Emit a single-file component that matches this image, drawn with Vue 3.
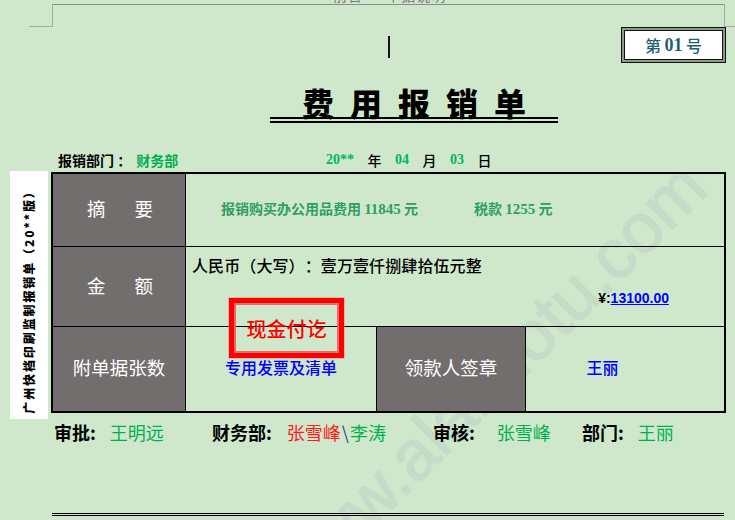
<script setup>
const sideText = '广州快档印刷监制报销单（20**版）'
</script>

<template>
  <div class="page">
    <div class="watermark">www.alaimotu.com</div>
    <div class="top-clip">前言 · 单据说明</div>
    <div class="rule-top"></div>
    <i class="crop crop-lv"></i><i class="crop crop-lh"></i>
    <i class="crop crop-rv"></i><i class="crop crop-rh"></i>
    <i class="caret"></i>

    <div class="number-row layer">
      <div class="number-box"><span>第 <b>01</b> 号</span></div>
    </div>

    <div class="title-row layer">
      <h1 class="title">费用报销单</h1>
    </div>

    <div class="meta layer">
      <div class="dept"><span class="k">报销部门 ：</span><span class="green dept-name">财务部</span></div>
      <div class="date">
        <b class="num">20**</b><span>年</span><b class="num">04</b><span>月</span><b class="num">03</b><span>日</span>
      </div>
    </div>

    <div class="form-wrap layer">
      <div class="side"><span>{{ sideText }}</span></div>
      <div class="sheet">
        <div class="head r1 wide"><span>摘</span><span>要</span></div>
        <div class="summary">
          <span>报销购买办公用品费用 <span class="n">11845</span> 元</span>
          <span>税款 <span class="n">1255</span> 元</span>
        </div>
        <div class="head r2 wide"><span>金</span><span>额</span></div>
        <div class="amount">
          <div class="caps">人民币（大写）：壹万壹仟捌肆拾伍元整</div>
          <div class="figure">¥:<u>13100.00</u></div>
        </div>
        <div class="head r3">附单据张数</div>
        <div class="bills">专用发票及清单</div>
        <div class="head r3">领款人签章</div>
        <div class="payee">王丽</div>
        <div class="stamp"><span>现金付讫</span></div>
      </div>
    </div>

    <div class="signs layer">
      <div class="sign s1"><b>审批:</b><span class="green">王明远</span></div>
      <div class="sign s2"><b>财务部:</b><span><em>张雪峰</em><i class="sep">\</i><span class="green">李涛</span></span></div>
      <div class="sign s3"><b>审核:</b><span class="green">张雪峰</span></div>
      <div class="sign s4"><b>部门:</b><span class="green">王丽</span></div>
    </div>

    <div class="foot-rule"></div>
  </div>
</template>

<style>
html, body { margin: 0; background: #cfe8cc; }
</style>

<style scoped>
.page {
  position: relative;
  width: 735px;
  height: 520px;
  overflow: hidden;
  box-sizing: border-box;
  padding-top: 27px;
  background: #cfe8cc;
  color: #000;
  font-family: "Noto Sans CJK SC", "Liberation Serif", serif;
  text-spacing-trim: space-all;
}
.layer { position: relative; z-index: 1; }
.watermark {
  position: absolute;
  z-index: 0;
  left: 298px;
  top: 545px;
  font: 400 70px/70px "Liberation Sans", sans-serif;
  -webkit-text-stroke: 1.5px #c6dbc8;
  color: #c6dbc8;
  white-space: nowrap;
  transform-origin: 0 59.3px;
  transform: rotate(-45deg);
}
.top-clip {
  position: absolute;
  left: 333px;
  top: -12px;
  font-size: 14px;
  line-height: 14px;
  color: #777;
  letter-spacing: 1px;
}
.rule-top { position: absolute; left: 52px; right: 10px; top: 4px; height: 1px; background: #8c8c8c; }
.crop { position: absolute; background: #a3aea3; }
.crop-lv { left: 52px; top: 4px; width: 1px; height: 23px; }
.crop-lh { left: 29px; top: 26px; width: 24px; height: 1px; }
.crop-rv { left: 724px; top: 4px; width: 1px; height: 23px; }
.crop-rh { left: 724px; top: 26px; width: 11px; height: 1px; }
.caret { position: absolute; left: 388px; top: 36px; width: 2px; height: 22px; background: #1d1024; }

.number-row { display: flex; justify-content: flex-end; padding-right: 9px; }
.number-box {
  position: relative;
  box-sizing: border-box;
  width: 105px;
  height: 36px;
  border: 1px solid #111;
  background: #8f9a8f;
  padding: 2px;
}
.number-box span {
  display: flex;
  align-items: center;
  justify-content: center;
  box-sizing: border-box;
  height: 100%;
  border: 1px solid #111;
  background: #fff;
  color: #1f5f6f;
  font-size: 16px;
  font-weight: 500;
  white-space: pre;
}
.number-box b { font: 700 18px "Liberation Serif", serif; }

.title-row { display: flex; margin-top: 23px; padding-left: 270px; }
.title {
  box-sizing: border-box;
  width: 288px;
  height: 37px;
  margin: 0;
  padding-left: 16px;
  border-bottom: 6px double #000;
  text-align: center;
  font-size: 32px;
  line-height: 32px;
  font-weight: 900;
  letter-spacing: 16px;
  white-space: nowrap;
  font-family: "Noto Sans CJK SC", sans-serif;
}

.meta {
  display: flex;
  box-sizing: border-box;
  height: 20px;
  margin-top: 27px;
  padding-left: 58px;
  align-items: center;
  font-size: 14px;
  font-weight: 700;
}
.dept { width: 268px; white-space: nowrap; }
.dept-name { margin-left: 5px; }
.green { color: #00b050; }
.date { display: flex; align-items: center; gap: 13.5px; font-weight: 500; }
.date .num { font: 700 14px "Liberation Serif", serif; color: #00b662; }

.form-wrap { display: flex; margin-top: 2px; padding-left: 10px; height: 249px; }
.side {
  display: flex;
  align-items: center;
  justify-content: center;
  width: 38px;
  height: 248px;
  margin-top: -1px;
  background: #fff;
  overflow: hidden;
}
.side span {
  flex: none;
  transform: rotate(-90deg) translateX(-4px);
  font-size: 12px;
  line-height: 14px;
  font-weight: 900;
  white-space: nowrap;
  letter-spacing: 1.9px;
}
.sheet {
  position: relative;
  box-sizing: border-box;
  width: 675px;
  height: 241px;
  margin-left: 3px;
  border: 2px solid #000;
  display: grid;
  grid-template-columns: 133px 191px 149px 1fr;
  grid-template-rows: 73px 80px 1fr;
}
.head {
  display: flex;
  align-items: center;
  justify-content: center;
  background: #736e6e;
  color: #fff;
  font-size: 18.5px;
  white-space: nowrap;
  border-right: 1px solid #000;
  box-sizing: border-box;
}
.wide { gap: 29px; padding-left: 2px; }
.r1 { border-bottom: 1px solid #000; padding-bottom: 5px; }
.r2 { border-bottom: 1px solid #000; padding-bottom: 4px; }
.r3 { padding-bottom: 4px; }
.summary {
  grid-column: 2 / 5;
  display: flex;
  align-items: center;
  gap: 56px;
  padding: 0 0 4px 35px;
  border-bottom: 1px solid #000;
  color: #2f9e63;
  font-size: 14px;
  font-weight: 700;
  white-space: nowrap;
}
.n { font: 700 15px "Liberation Serif", serif; }
.amount {
  grid-column: 2 / 5;
  border-bottom: 1px solid #000;
  padding: 7px 0 0 6px;
}
.caps { font-size: 16px; line-height: 22px; font-weight: 500; white-space: nowrap; letter-spacing: 0.1px; }
.figure {
  margin: 14px 55px 0 0;
  text-align: right;
  font: 700 14px "Liberation Sans", sans-serif;
  white-space: nowrap;
}
.figure u { color: #00f; }
.bills, .payee {
  display: flex;
  align-items: center;
  justify-content: center;
  color: #00f;
  font-size: 16px;
  font-weight: 500;
  white-space: nowrap;
  padding-bottom: 5px;
}
.bills { border-right: 1px solid #000; }
.payee { padding-right: 45px; }
.stamp {
  position: absolute;
  left: 176px;
  top: 124px;
  box-sizing: border-box;
  width: 115px;
  height: 60px;
  border: 5px solid #ff0000;
  display: flex;
  align-items: center;
  justify-content: center;
  color: #ff0000;
  font-size: 20px;
  font-weight: 500;
  box-shadow: inset 0 0 0 2px #ea6a6a, 0 0 0 0.5px #ef8a8a;
}

.signs {
  display: flex;
  margin-top: -2px;
  padding-left: 54px;
  height: 26px;
  align-items: center;
  font-size: 18px;
  white-space: nowrap;
}
.sign { display: flex; align-items: center; }
.sign b { font-weight: 700; }
.sign em { font-style: normal; color: #ff1a1a; }
.sep { font-style: normal; color: #1f4f8f; margin: 0 1px; }
.s1 { width: 158px; gap: 14px; }
.s2 { width: 221px; gap: 15px; }
.s3 { width: 149px; gap: 22px; }
.s4 { gap: 14px; }
.foot-rule {
  position: absolute;
  z-index: 1;
  left: 52px;
  top: 513px;
  width: 672px;
  height: 3px;
  box-sizing: border-box;
  border-top: 1px solid #000;
  border-bottom: 1px solid #000;
}
</style>
